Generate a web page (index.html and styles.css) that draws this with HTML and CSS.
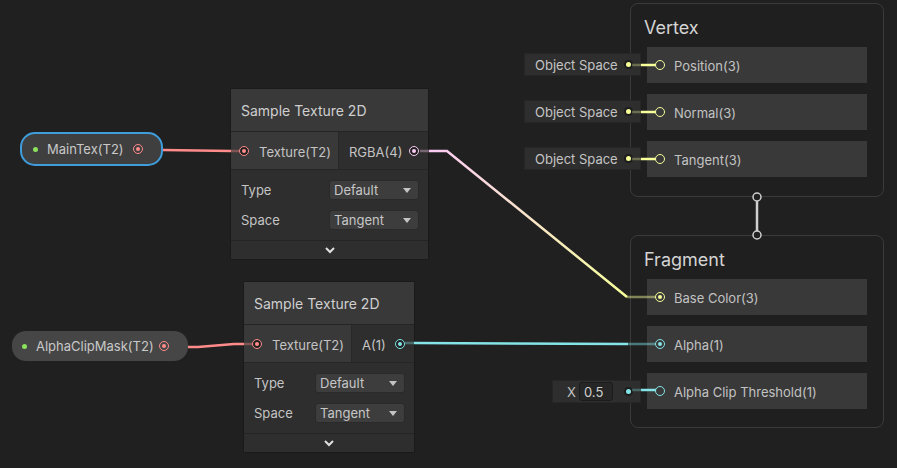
FILE: index.html
```html
<!DOCTYPE html>
<html>
<head>
<meta charset="utf-8">
<link rel="stylesheet" href="styles.css">
</head>
<body>
<div class="canvas">

  <div class="pill pill-main selected">
    <span class="gdot"></span><span class="pill-label">MainTex(T2)</span><span class="port red filled"></span>
  </div>

  <div class="pill pill-alpha">
    <span class="gdot"></span><span class="pill-label">AlphaClipMask(T2)</span><span class="port red filled"></span>
  </div>

  <div class="node node-a">
    <div class="node-title">Sample Texture 2D</div>
    <div class="node-ports">
      <div class="port-in"><span class="port red filled"></span><span class="lbl">Texture(T2)</span></div>
      <div class="port-out"><span class="lbl">RGBA(4)</span><span class="port pink filled"></span></div>
    </div>
    <div class="node-controls">
      <div class="ctrl-row"><span>Type</span><div class="dropdown"><span>Default</span><span class="caret"></span></div></div>
      <div class="ctrl-row"><span>Space</span><div class="dropdown"><span>Tangent</span><span class="caret"></span></div></div>
    </div>
    <div class="node-expand"><svg width="12" height="8" viewBox="0 0 12 8"><path d="M2 2 L6 6 L10 2" fill="none" stroke="#e0e0e0" stroke-width="2"/></svg></div>
  </div>

  <div class="node node-b">
    <div class="node-title">Sample Texture 2D</div>
    <div class="node-ports">
      <div class="port-in"><span class="port red filled"></span><span class="lbl">Texture(T2)</span></div>
      <div class="port-out"><span class="lbl">A(1)</span><span class="port cyan filled"></span></div>
    </div>
    <div class="node-controls">
      <div class="ctrl-row"><span>Type</span><div class="dropdown"><span>Default</span><span class="caret"></span></div></div>
      <div class="ctrl-row"><span>Space</span><div class="dropdown"><span>Tangent</span><span class="caret"></span></div></div>
    </div>
    <div class="node-expand"><svg width="12" height="8" viewBox="0 0 12 8"><path d="M2 2 L6 6 L10 2" fill="none" stroke="#e0e0e0" stroke-width="2"/></svg></div>
  </div>

  <div class="block block-vertex">
    <div class="block-title">Vertex</div>
    <div class="slots">
      <div class="slot">
        <div class="inline-field"><span>Object Space</span><span class="mini-dot yellow"></span></div>
        <span class="port yellow"></span><span class="lbl">Position(3)</span>
      </div>
      <div class="slot">
        <div class="inline-field"><span>Object Space</span><span class="mini-dot yellow"></span></div>
        <span class="port yellow"></span><span class="lbl">Normal(3)</span>
      </div>
      <div class="slot">
        <div class="inline-field"><span>Object Space</span><span class="mini-dot yellow"></span></div>
        <span class="port yellow"></span><span class="lbl">Tangent(3)</span>
      </div>
    </div>
  </div>

  <div class="block block-fragment">
    <div class="block-title">Fragment</div>
    <div class="slots">
      <div class="slot"><span class="port yellow filled"></span><span class="lbl">Base Color(3)</span></div>
      <div class="slot"><span class="port cyan filled"></span><span class="lbl">Alpha(1)</span></div>
      <div class="slot">
        <div class="inline-field x-field"><span class="x-label">X</span><span class="num-box">0.5</span><span class="mini-dot cyan"></span></div>
        <span class="port cyan"></span><span class="lbl">Alpha Clip Threshold(1)</span>
      </div>
    </div>
  </div>

  <svg class="edges" width="897" height="468" viewBox="0 0 897 468">
    <defs>
      <linearGradient id="g1" gradientUnits="userSpaceOnUse" x1="430" y1="151" x2="627" y2="297">
        <stop offset="0" stop-color="#fbcbf4"/>
        <stop offset="1" stop-color="#f6ff9a"/>
      </linearGradient>
    </defs>
    <line x1="163" y1="150" x2="231" y2="151" stroke="#ff8b8b" stroke-width="2.5"/>
    <line x1="231" y1="151" x2="239" y2="151" stroke="#ff8b8b" stroke-width="2.5" opacity="0.35"/>
    <polyline points="188,347 198,347 234,344 244,344" fill="none" stroke="#ff8b8b" stroke-width="2.5"/>
    <line x1="244" y1="344" x2="253" y2="344" stroke="#ff8b8b" stroke-width="2.5" opacity="0.35"/>
    <line x1="420" y1="151" x2="429" y2="151" stroke="#fbcbf4" stroke-width="2.5" opacity="0.35"/>
    <polyline points="429,151 447,151 627,297" fill="none" stroke="url(#g1)" stroke-width="2.5"/>
    <line x1="627" y1="297" x2="655" y2="297" stroke="#f6ff9a" stroke-width="2.5" opacity="0.45"/>
    <line x1="405" y1="343" x2="414" y2="343" stroke="#84e4e7" stroke-width="2.5" opacity="0.35"/>
    <line x1="414" y1="343" x2="628" y2="344" stroke="#84e4e7" stroke-width="2.5"/>
    <line x1="628" y1="344" x2="655" y2="344" stroke="#84e4e7" stroke-width="2.5" opacity="0.45"/>
    <g stroke="#f6ff9a" stroke-width="2.5">
      <line x1="632" y1="65" x2="641" y2="65" opacity="0.3"/>
      <line x1="641" y1="65" x2="656" y2="65"/>
      <line x1="632" y1="112" x2="641" y2="112" opacity="0.3"/>
      <line x1="641" y1="112" x2="656" y2="112"/>
      <line x1="632" y1="159" x2="641" y2="159" opacity="0.3"/>
      <line x1="641" y1="159" x2="656" y2="159"/>
    </g>
    <g stroke="#84e4e7" stroke-width="2.5">
      <line x1="632" y1="390" x2="641" y2="390" opacity="0.3"/>
      <line x1="641" y1="390" x2="656" y2="390"/>
    </g>
    <line x1="757" y1="201" x2="757" y2="231" stroke="#cfcfcf" stroke-width="2.5"/>
    <circle cx="757" cy="197" r="4" fill="#202020" stroke="#cfcfcf" stroke-width="1.5"/>
    <circle cx="757" cy="235" r="4" fill="#202020" stroke="#cfcfcf" stroke-width="1.5"/>
  </svg>
</div>
</body>
</html>
```
FILE: styles.css
```css
* { box-sizing: border-box; }
html, body {
  margin: 0;
  padding: 0;
  background: #202020;
}
body {
  font-family: "Inter", "Noto Sans", sans-serif;
  font-size: 13px;
  color: #c4c4c4;
}
.canvas {
  position: relative;
  width: 897px;
  height: 468px;
  overflow: hidden;
  background: #202020;
}
.edges {
  position: absolute;
  left: 0;
  top: 0;
  pointer-events: none;
}
.lbl { padding-top: 2px; }

/* ports */
.port {
  position: relative;
  flex: none;
  width: 10px;
  height: 10px;
  border-radius: 50%;
  border: 1.5px solid currentColor;
  background: #202020;
}
.port.filled::after {
  content: "";
  position: absolute;
  left: 50%;
  top: 50%;
  width: 4px;
  height: 4px;
  margin: -2px 0 0 -2px;
  border-radius: 50%;
  background: currentColor;
}
.red { color: #ff8b8b; }
.pink { color: #fbcbf4; }
.cyan { color: #84e4e7; }
.yellow { color: #f6ff9a; }

/* property pills */
.pill {
  position: absolute;
  display: flex;
  align-items: center;
  height: 30px;
  border-radius: 14px;
  background: #464646;
  color: #c8c8c8;
}
.pill .port { background: #464646; }
.pill-main {
  left: 20px;
  top: 132px;
  width: 143px;
  height: 34px;
  border: 2px solid #3f9ddc;
  border-radius: 15px;
  padding: 0 18px 0 11px;
  background: #3f3f3f;
}
.pill-main .port { background: #3f3f3f; }
.pill-alpha {
  left: 12px;
  top: 331px;
  width: 176px;
  padding: 0 19px 0 10px;
}
.gdot {
  flex: none;
  width: 5px;
  height: 5px;
  border-radius: 50%;
  background: #8be15c;
  margin-right: 9px;
}
.pill-label { flex: 1; }

/* nodes */
.node {
  position: absolute;
  display: flex;
  flex-direction: column;
  background: #2e2e2e;
  border: 1px solid #1a1a1a;
  border-radius: 2px;
}
.node-a { left: 230px; top: 88px; width: 199px; }
.node-b { left: 243px; top: 281px; width: 172px; }
.node-title {
  height: 43px;
  display: flex;
  align-items: center;
  padding-left: 10px;
  background: #393939;
  border-bottom: 1px solid #242424;
  font-size: 14px;
  color: #cfcfcf;
}
.node-ports {
  display: flex;
  height: 38px;
  border-bottom: 1px solid #262626;
}
.port-in {
  flex: none;
  width: 108px;
  display: flex;
  align-items: center;
  gap: 10px;
  padding-left: 8px;
  background: #393939;
  border-right: 1px solid #282828;
}
.port-out {
  flex: 1;
  display: flex;
  align-items: center;
  justify-content: space-between;
  padding: 0 9px 0 10px;
  background: #2e2e2e;
}
.node-controls {
  display: flex;
  flex-direction: column;
  gap: 10px;
  padding: 10px 9px 10px 10px;
  background: #2e2e2e;
}
.ctrl-row {
  display: flex;
  align-items: center;
  justify-content: space-between;
  height: 20px;
}
.dropdown {
  width: 90px;
  height: 20px;
  display: flex;
  align-items: center;
  justify-content: space-between;
  padding: 0 7px 0 4px;
  background: #3d3d3d;
  border: 1px solid #2a2a2a;
  border-radius: 3px;
  color: #c6c6c6;
}
.caret {
  width: 0;
  height: 0;
  border-left: 4.5px solid transparent;
  border-right: 4.5px solid transparent;
  border-top: 5px solid #c4c4c4;
}
.node-expand {
  height: 19px;
  display: flex;
  align-items: center;
  justify-content: center;
  border-top: 1px solid #242424;
  background: #2e2e2e;
}

/* master blocks */
.block {
  position: absolute;
  border: 1px solid #3a3a3a;
  border-radius: 8px;
  background: #1f1f1f;
  padding: 0 16px 0 16px;
}
.block-vertex { left: 630px; top: 3px; width: 254px; height: 194px; }
.block-fragment { left: 630px; top: 235px; width: 254px; height: 193px; }
.block-title {
  height: 43px;
  display: flex;
  align-items: center;
  padding-top: 3px;
  margin-left: -3px;
  font-size: 18px;
  color: #d4d4d4;
}
.slots {
  display: flex;
  flex-direction: column;
  gap: 11px;
}
.slot {
  position: relative;
  height: 36px;
  display: flex;
  align-items: center;
  gap: 9px;
  padding-left: 8px;
  background: #393939;
  color: #c2c2c2;
}
.slot .port { background: #393939; }
.inline-field {
  position: absolute;
  right: calc(100% + 6px);
  top: 6px;
  width: 117px;
  height: 23px;
  display: flex;
  align-items: center;
  justify-content: space-between;
  padding: 0 9px 0 10px;
  background: #2e2e2e;
  border: 1px solid #262626;
  color: #c4c4c4;
}
.mini-dot {
  flex: none;
  width: 5px;
  height: 5px;
  border-radius: 50%;
  background: currentColor;
  box-shadow: 0 0 0 2px #1c1c1c;
}
.x-field {
  width: 89px;
  height: 23px;
  top: 7px;
  padding: 0 9px 0 14px;
  justify-content: flex-start;
}
.x-label { width: 12px; color: #c4c4c4; }
.num-box {
  width: 34px;
  height: 19px;
  display: flex;
  align-items: center;
  padding-left: 4px;
  margin-right: auto;
  background: #262626;
  border: 1px solid #1c1c1c;
  border-radius: 3px;
  color: #d0d0d0;
}
```
